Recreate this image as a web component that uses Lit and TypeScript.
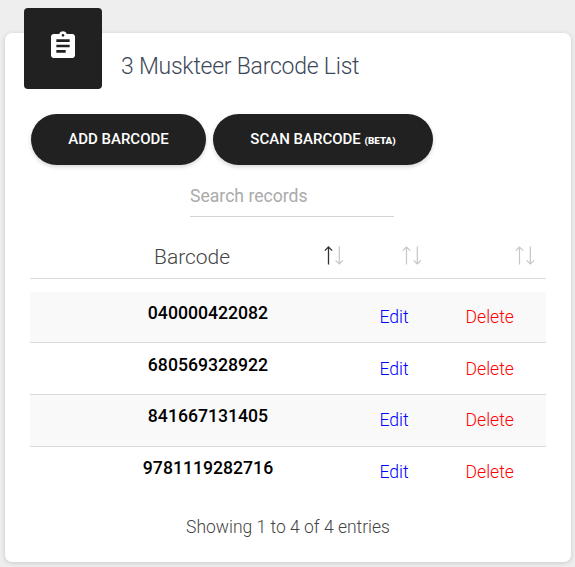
import { LitElement, html, css, svg } from "lit";
import { customElement, property } from "lit/decorators.js";
import { classMap } from "lit/directives/class-map.js";

@customElement("sort-arrows")
class SortArrows extends LitElement {
  @property({ type: Boolean }) ascending = false;

  static styles = css`
    :host { display: block; width: 20px; height: 19px; }
    svg { display: block; }
    path { fill: none; stroke: #c6c6c6; stroke-width: 1.2; }
    .active { stroke: #333; stroke-width: 1.3; }
  `;

  render() {
    return html`<svg width="20" height="19" viewBox="0 0 20 19">
      ${svg`<path class=${classMap({ active: this.ascending })} d="M4.5 18.5V1.2M.8 4.6L4.5 1L8.2 4.6"/>
      <path d="M15.3 .5V17.8M11.6 14.4L15.3 18L19 14.4"/>`}
    </svg>`;
  }
}

@customElement("app-root")
class AppRoot extends LitElement {
  private barcodes = ["040000422082", "680569328922", "841667131405", "9781119282716"];

  static styles = css`
    :host {
      display: block;
      box-sizing: border-box;
      height: 567px;
      padding: 33px 4px 5px 5px;
      background: #eee;
      font-family: Roboto, "Liberation Sans", sans-serif;
      font-weight: 300;
      color: #444;
      overflow: hidden;
    }
    .card {
      box-sizing: border-box;
      height: 529px;
      padding: 0 25px;
      background: #fff;
      border-radius: 7px;
      box-shadow: 0 1px 5px rgba(0, 0, 0, 0.16);
    }
    .head { display: flex; height: 81px; margin-left: -6px; }
    .badge {
      display: flex;
      align-items: center;
      justify-content: center;
      width: 78px;
      height: 81px;
      margin-top: -25px;
      padding-bottom: 5px;
      box-sizing: border-box;
      border-radius: 4px;
      background: #212121;
    }
    .badge svg { fill: #fff; }
    h4 {
      margin: 19px 0 0 19px;
      font-size: 23px;
      letter-spacing: -0.24px;
      line-height: 30px;
      font-weight: 300;
      color: #3c4858;
      white-space: nowrap;
    }
    .actions { display: flex; gap: 7px; margin-left: 1px; }
    button {
      width: 175px;
      height: 51px;
      padding: 0;
      border: 0;
      border-radius: 26px;
      background: #212121;
      color: #fff;
      font: 500 15px/51px Roboto, sans-serif;
      white-space: nowrap;
      box-shadow: 0 2px 4px rgba(0, 0, 0, 0.16);
    }
    .scan { width: 220px; }
    small { font-size: 9.8px; font-weight: 900; }
    input {
      display: block;
      box-sizing: border-box;
      width: 204px;
      height: 42px;
      margin: 10px 0 0 160px;
      padding: 0;
      border: 0;
      border-bottom: 1px solid #d5d5d5;
      outline: 0;
      background: none;
      font: 400 17.6px/40px Roboto, sans-serif;
    }
    input::placeholder { color: #aaa; opacity: 1; }
    .row {
      display: grid;
      grid-template-columns: 323px 81px 112px;
      height: 51px;
      border-bottom: 1px solid #d9d9d9;
      box-sizing: border-box;
      width: 516px;
    }
    .columns { height: 62px; margin-bottom: 13px; }
    .heading { display: flex; justify-content: flex-end; padding-top: 28px; }
    .heading span { margin-right: auto; padding-left: 124px; font-size: 21px; line-height: 24px; }
    .heading sort-arrows { margin: 1px 9px 0 0; }
    .middle { margin-right: 3px; }
    .last { margin-right: 2px; }
    .entry { height: 52px; }
    .entry:nth-child(2) { height: 51px; }
    .entry:nth-child(3) { padding-top: 1px; }
    .entry:nth-child(even) { background: #f9f9f9; }
    .entry:last-child { border-bottom-color: transparent; }
    .code { padding-left: 33px; text-align: center; font-size: 17.65px; line-height: 42px; font-weight: 500; color: #000; }
    a { font-size: 17.6px; line-height: 50px; text-decoration: none; }
    .edit { color: #00f; padding-left: 26.5px; }
    .delete { color: #f00; padding-left: 31.5px; }
    .summary { margin-top: 15px; text-align: center; font-size: 17.5px; line-height: 26px; }
  `;

  render() {
    return html`
      <section class="card">
        <header class="head">
          <div class="badge">
            <svg width="32" height="32" viewBox="0 0 24 24"><path d="M19 3h-4.18C14.4 1.84 13.3 1 12 1s-2.4.84-2.82 2H5c-1.1 0-2 .9-2 2v14c0 1.1.9 2 2 2h14c1.1 0 2-.9 2-2V5c0-1.1-.9-2-2-2zm-7 0c.55 0 1 .45 1 1s-.45 1-1 1-1-.45-1-1 .45-1 1-1zm2 14H7v-2h7v2zm3-4H7v-2h10v2zm0-4H7V7h10v2z"/></svg>
          </div>
          <h4>3 Muskteer Barcode List</h4>
        </header>
        <div class="actions">
          <button>ADD BARCODE</button>
          <button class="scan">SCAN BARCODE <small>(BETA)</small></button>
        </div>
        <input type="search" placeholder="Search records" />
        <div class="table">
          <div class="row columns">
            <div class="heading"><span>Barcode</span><sort-arrows ascending></sort-arrows></div>
            <div class="heading middle"><sort-arrows></sort-arrows></div>
            <div class="heading last"><sort-arrows></sort-arrows></div>
          </div>
          ${this.barcodes.map((code) => html`
            <div class="row entry">
              <div class="code">${code}</div>
              <a class="edit">Edit</a>
              <a class="delete">Delete</a>
            </div>`)}
        </div>
        <div class="summary">Showing 1 to 4 of 4 entries</div>
      </section>
    `;
  }
}
